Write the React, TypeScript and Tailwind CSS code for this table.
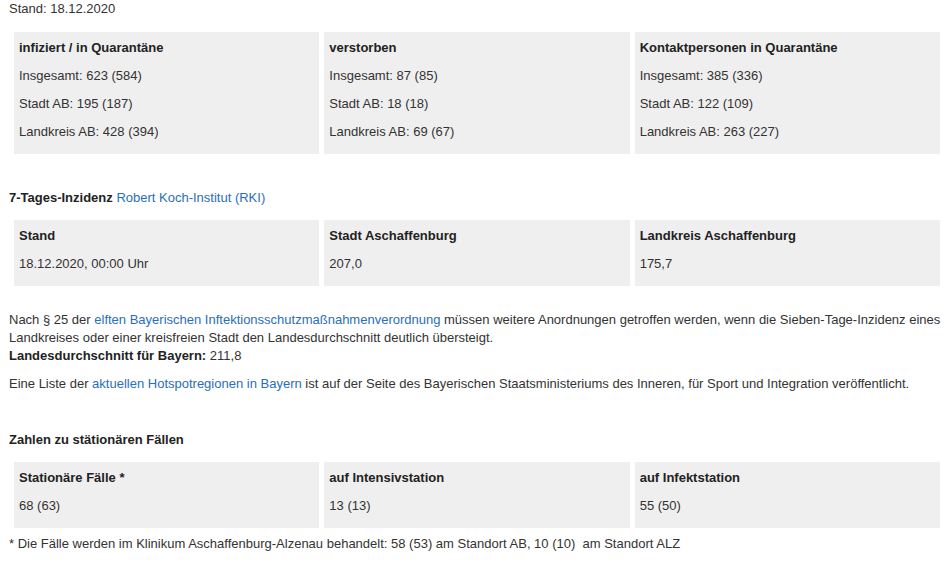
const font = { fontFamily: '"Liberation Sans", Arial, sans-serif' };

type Box = { title: string; lines: string[] };

const fallzahlen: Box[] = [
  {
    title: "infiziert / in Quarantäne",
    lines: ["Insgesamt: 623 (584)", "Stadt AB: 195 (187)", "Landkreis AB: 428 (394)"],
  },
  {
    title: "verstorben",
    lines: ["Insgesamt: 87 (85)", "Stadt AB: 18 (18)", "Landkreis AB: 69 (67)"],
  },
  {
    title: "Kontaktpersonen in Quarantäne",
    lines: ["Insgesamt: 385 (336)", "Stadt AB: 122 (109)", "Landkreis AB: 263 (227)"],
  },
];

const inzidenz: Box[] = [
  { title: "Stand", lines: ["18.12.2020, 00:00 Uhr"] },
  { title: "Stadt Aschaffenburg", lines: ["207,0"] },
  { title: "Landkreis Aschaffenburg", lines: ["175,7"] },
];

const stationaer: Box[] = [
  { title: "Stationäre Fälle *", lines: ["68 (63)"] },
  { title: "auf Intensivstation", lines: ["13 (13)"] },
  { title: "auf Infektstation", lines: ["55 (50)"] },
];

const BoxRow = ({ boxes, className }: { boxes: Box[]; className?: string }) => (
  <div className={`ml-[14px] mr-[11px] grid grid-cols-3 gap-[5px] ${className ?? ""}`}>
    {boxes.map((box) => (
      <div key={box.title} className="bg-[#efefef] px-[5px] pt-[7px] pb-[13px]">
        <div className="font-bold text-[#222]">{box.title}</div>
        {box.lines.map((line) => (
          <div key={line} className="mt-[10px]">
            {line}
          </div>
        ))}
      </div>
    ))}
  </div>
);

const Link = ({ children }: { children: React.ReactNode }) => (
  <a href="#" className="text-[#2a6ebb]">
    {children}
  </a>
);

export default function App() {
  return (
    <div style={font} className="w-[951px] h-[569px] bg-white text-[13px] leading-[18px] text-[#333] overflow-hidden">
      <p className="pl-[9px] pt-0">Stand: 18.12.2020</p>

      <BoxRow boxes={fallzahlen} className="mt-[14px]" />

      <p className="pl-[9px] mt-[35px]">
        <b className="text-[#222]">7-Tages-Inzidenz</b> <Link>Robert Koch-Institut (RKI)</Link>
      </p>

      <BoxRow boxes={inzidenz} className="mt-[13px]" />

      <div className="pl-[9px] pr-[4px] mt-[25px]">
        <p>
          Nach § 25 der <Link>elften Bayerischen Inftektionsschutzmaßnahmenverordnung</Link> müssen weitere
          Anordnungen getroffen werden, wenn die Sieben-Tage-Inzidenz eines Landkreises oder einer kreisfreien
          Stadt den Landesdurchschnitt deutlich übersteigt.
          <br />
          <b className="text-[#222]">Landesdurchschnitt für Bayern:</b> 211,8
        </p>
        <p className="mt-[10px]">
          Eine Liste der <Link>aktuellen Hotspotregionen in Bayern</Link> ist auf der Seite des Bayerischen
          Staatsministeriums des Inneren, für Sport und Integration veröffentlicht.
        </p>
        <p className="mt-[38px] font-bold text-[#222]">Zahlen zu stätionären Fällen</p>
      </div>

      <BoxRow boxes={stationaer} className="mt-[13px]" />

      <p className="pl-[9px] mt-[7px]">
        * Die Fälle werden im Klinikum Aschaffenburg-Alzenau behandelt: 58 (53) am Standort AB, 10 (10)&nbsp; am
        Standort ALZ
      </p>
    </div>
  );
}
